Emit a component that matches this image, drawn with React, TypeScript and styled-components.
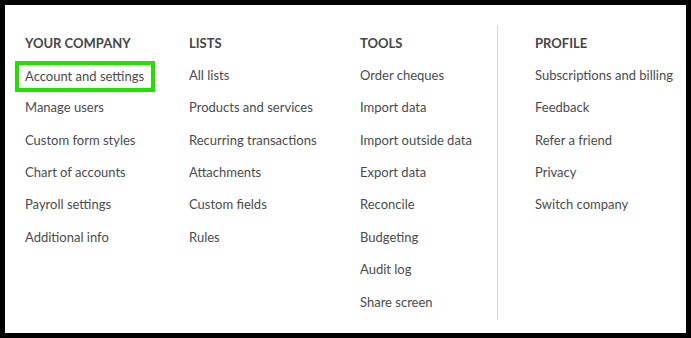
import React from "react";
import styled, { createGlobalStyle } from "styled-components";

interface Section {
  title: string;
  items: string[];
}

const sections: Section[] = [
  {
    title: "YOUR COMPANY",
    items: [
      "Account and settings",
      "Manage users",
      "Custom form styles",
      "Chart of accounts",
      "Payroll settings",
      "Additional info",
    ],
  },
  {
    title: "LISTS",
    items: [
      "All lists",
      "Products and services",
      "Recurring transactions",
      "Attachments",
      "Custom fields",
      "Rules",
    ],
  },
  {
    title: "TOOLS",
    items: [
      "Order cheques",
      "Import data",
      "Import outside data",
      "Export data",
      "Reconcile",
      "Budgeting",
      "Audit log",
      "Share screen",
    ],
  },
  {
    title: "PROFILE",
    items: [
      "Subscriptions and billing",
      "Feedback",
      "Refer a friend",
      "Privacy",
      "Switch company",
    ],
  },
];

const App: React.FC = () => {
  return (
    <>
      <GlobalStyle />
      <Frame>
        <Menu>
          {sections.map((section, i) => (
            <Column key={section.title} index={i} divider={i === 2}>
              <Heading>{section.title}</Heading>
              {section.items.map((item) => (
                <Item key={item}>
                  {item === "Account and settings" ? (
                    <Highlight>{item}</Highlight>
                  ) : (
                    item
                  )}
                </Item>
              ))}
            </Column>
          ))}
        </Menu>
      </Frame>
    </>
  );
};

const GlobalStyle = createGlobalStyle`
  html, body {
    margin: 0;
    padding: 0;
    background: #000;
  }
  body {
    font-family: Lato, "Liberation Sans", sans-serif;
    -webkit-font-smoothing: antialiased;
  }
`;

const Frame = styled.div`
  width: 691px;
  height: 338px;
  box-sizing: border-box;
  border: 5px solid #000;
  background: #fff;
  overflow: hidden;
`;

const Menu = styled.div`
  display: grid;
  grid-template-columns: 164px 171px 138px 1fr;
  padding: 19.5px 0 0 20px;
`;

const colPadding = ["0", "0", "0", "37px"];

const Column = styled.div<{ index: number; divider: boolean }>`
  display: flex;
  flex-direction: column;
  padding: 2px 0 2px ${({ index }) => colPadding[index]};
  border-right: ${({ divider }) => (divider ? "1px solid #d9dadc" : "none")};
`;

const Heading = styled.div`
  height: 32.4px;
  line-height: 32.4px;
  font-size: 13px;
  font-weight: 700;
  color: #45464a;
  white-space: nowrap;
`;

const Item = styled.div`
  height: 32.4px;
  line-height: 33.4px;
  font-size: 13px;
  color: #4a4b4f;
  white-space: nowrap;
`;

const Highlight = styled.span`
  display: inline-block;
  line-height: 23px;
  margin-left: -10px;
  padding: 0 7px 0 6px;
  border: 4px solid #22e000;
  vertical-align: middle;
`;

export default App;
